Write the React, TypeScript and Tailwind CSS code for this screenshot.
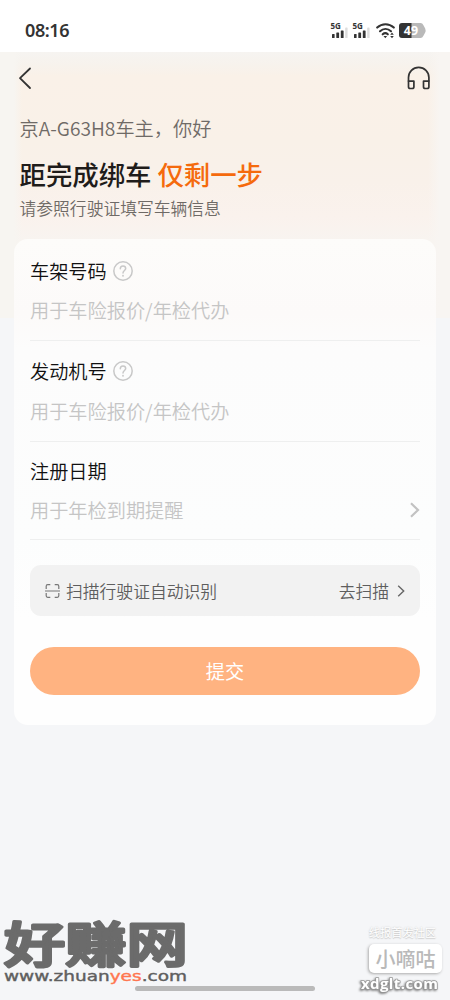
import React from 'react';

const fields = [
  {
    id: 'vin',
    label: '车架号码',
    placeholder: '用于车险报价/年检代办',
    help: true,
    arrow: false,
    box: 'pt-5 pb-[18px]',
    gap: 'mt-[15px]'
  },
  {
    id: 'engine',
    label: '发动机号',
    placeholder: '用于车险报价/年检代办',
    help: true,
    arrow: false,
    box: 'pt-[18px] pb-[18px]',
    gap: 'mt-4'
  },
  {
    id: 'date',
    label: '注册日期',
    placeholder: '用于年检到期提醒',
    help: false,
    arrow: true,
    box: 'pt-[17px] pb-[17px]',
    gap: 'mt-[15px]'
  }
];

const Signal = () => (
  <svg className="w-[17px] h-4 overflow-visible" viewBox="0 0 17 16">
    <text x="-0.5" y="5.6" fontSize="8" fontWeight="700" fill="#333" fontFamily="Noto Sans, sans-serif">5G</text>
    <rect x="1" y="11" width="2.6" height="4" rx="0.6" fill="#333" />
    <rect x="5.3" y="9.5" width="2.8" height="5.5" rx="0.6" fill="#333" />
    <rect x="9.8" y="7.5" width="2.8" height="7.5" rx="0.6" fill="#333" />
    <rect x="14.2" y="4.5" width="2.4" height="10.5" rx="0.6" fill="#ddd" />
  </svg>
);

const StatusBar = () => (
  <div className="h-[52px] bg-white flex items-start justify-between pl-[25px] pr-[24px]">
    <span className="mt-[17.5px] text-[18px] leading-6 font-semibold text-[#333] font-['Noto_Sans',sans-serif] tracking-[-0.4px]">
      08:16
    </span>
    <div className="mt-[23px] flex items-start">
      <Signal />
      <span className="w-[5px]" />
      <Signal />
      <svg className="ml-[6px] w-[19px] h-4" viewBox="0 0 19 16" fill="none" stroke="#333" strokeWidth="2.1" strokeLinecap="round">
        <path d="M1.2 4.6C6 .1 13 .1 17.8 4.6" />
        <path d="M4 8.2c3.3-3 7.7-3 11 0" />
        <path d="M6.7 11.3c1.6-1.4 3.6-1.4 5.1 0" />
        <path d="M7.5 13h3.6l-1.8 2.3z" fill="#333" stroke="none" />
        <path d="M14.2 11.7h3.6L16 9.4zM14.2 13h3.6L16 15.3z" fill="#333" stroke="none" />
      </svg>
      <svg className="ml-1 w-[27px] h-4" viewBox="0 0 27 16">
        <path d="M12 0H21.5Q23.5 0 24.3 2L26.2 5.5Q27 7.5 26.2 9.5L24.3 13Q23.5 15 21.5 15H12z" fill="#b9b9b9" />
        <path d="M12.5 0H3Q0 0 0 3V12Q0 15 3 15H12.5z" fill="#333" />
        <text x="12" y="12.2" fontSize="12.5" fontWeight="700" fill="#fff" textAnchor="middle" fontFamily="Noto Sans, sans-serif">49</text>
      </svg>
    </div>
  </div>
);

const HelpIcon = () => (
  <svg className="w-5 h-5" viewBox="0 0 20 20" fill="none" stroke="#c8c8c8" strokeWidth="1.5" strokeLinecap="round" strokeLinejoin="round">
    <circle cx="10" cy="10" r="9.2" />
    <path d="M7.3 7.8Q7.3 5 10 5T12.7 7.6C12.7 9.5 10 9.6 10 12" />
    <path d="M10 14.7v.1" strokeWidth="1.8" />
  </svg>
);

const Watermarks = () => (
  <>
    <div className="absolute left-[4px] top-[917px] w-[185px]">
      <svg className="block w-[185px] h-[54px] overflow-visible" viewBox="0 0 185 54">
        <g transform="translate(0 44.8) scale(1.29 1)">
          <text x="0" y="0" fontSize="47.5" fontWeight="500" fill="#6b6b6b" stroke="#6b6b6b" strokeWidth="3" strokeLinejoin="round" fontFamily="Noto Sans CJK SC, sans-serif">
            好赚网
          </text>
        </g>
      </svg>
      <svg className="block w-[185px] h-[14px] overflow-visible" viewBox="0 0 185 14">
        <text x="0" y="10" fontSize="14" fill="#5f5f5f" stroke="#5f5f5f" strokeWidth="0.4" textLength="183" lengthAdjust="spacingAndGlyphs" fontFamily="DejaVu Sans, sans-serif">
          www.zhuan<tspan fill="#ff7650" stroke="#ff7650">yes</tspan>.com
        </text>
      </svg>
    </div>
    <div className="absolute right-[8px] top-[924px] w-[84px] flex flex-col items-end">
      <span className="mr-[6px] text-[11.2px] leading-4 text-white [text-shadow:0_0_2px_#c5c5c5,0_1px_1px_#d0d0d0]">线报首发社区</span>
      <div className="mt-[4px] w-[73px] h-[29px] rounded-[5px] bg-white shadow-[-1px_1px_3px_#aaa] flex items-center justify-center text-[20px] leading-7 text-[#b9b9b9] font-medium">
        小嘀咕
      </div>
      <svg className="mt-[2px] w-[84px] h-5 overflow-visible [filter:drop-shadow(-1px_1px_1px_#777)]" viewBox="0 0 84 20">
        <text
          x="3"
          y="14"
          fontSize="15"
          fontWeight="700"
          fill="#fff"
          stroke="#999"
          strokeWidth="1.6"
          strokeLinejoin="round"
          paintOrder="stroke"
          textLength="77"
          lengthAdjust="spacing"
          fontFamily="Open Sans, Noto Sans, sans-serif"
        >
          xdglt.com
        </text>
      </svg>
    </div>
  </>
);

const App = () => {
  return (
    <div className="relative w-[450px] h-[1000px] overflow-hidden bg-[#f5f6f8] font-['Noto_Sans_CJK_SC',sans-serif]">
      <StatusBar />

      {/* Header tint runs behind the top of the card */}
      <div className="h-[266px] bg-[linear-gradient(to_right,#f7f5f1_0,#f7f5f1_14px,#f7f5f100_22px,#f8f5f200_428px,#f8f5f2_440px),linear-gradient(to_bottom,#f6f4f1_0,#f7f2ec_14px,#faf1e8_24px,#f9f1e8_90px,#f9f1ea_130px,#faf2ed_165px,#f8f4f0_188px,#f8f5f2_266px)]">
        {/* Navigation */}
        <div className="h-[52px] flex items-center justify-between pl-[18px] pr-[19px]">
          <svg className="w-[14px] h-6" viewBox="0 0 14 24" fill="none" stroke="#333" strokeWidth="1.8" strokeLinecap="round" strokeLinejoin="round">
            <path d="M12 2.5L2 12.2L12 22" />
          </svg>
          <svg className="w-6 h-6" viewBox="0 0 24 24" fill="none" stroke="#333" strokeWidth="1.7" strokeLinejoin="round">
            <path d="M1.5 15.5V11.5C1.5 5.7 6 1.4 11.7 1.4S21.9 5.7 21.9 11.5V15.5" />
            <path d="M1.5 15.2H6.9V20.7Q6.9 22.5 5.1 22.5H3.3Q1.5 22.5 1.5 20.7z" />
            <path d="M21.9 15.2H16.5V20.7Q16.5 22.5 18.3 22.5H20.1Q21.9 22.5 21.9 20.7z" />
          </svg>
        </div>

        {/* Greeting */}
        <div className="pl-[19.5px] pt-3">
          <p className="text-[19.2px] leading-6 font-[350] text-[#6f6a66]">京A-G63H8车主，你好</p>
          <h1 className="mt-[18px] text-[26.4px] leading-8 font-medium text-[#1f1c1a]">
            距完成绑车 <span className="text-[#f56a0d]">仅剩一步</span>
          </h1>
          <p className="mt-[6px] text-[16.8px] leading-6 font-[350] text-[#6f6a66]">请参照行驶证填写车辆信息</p>
        </div>
      </div>

      {/* Form card */}
      <div className="-mt-[79px] mx-[14px] h-[486px] px-4 rounded-[14px] bg-[linear-gradient(to_bottom,#fdfcfa_0,#fcfaf9_75px,#fcfcfc_110px,#fcfdfd_300px,#fefefe_380px)]">
        {fields.map((field) => (
          <div key={field.id} className={`border-b border-[#eeefef] ${field.box}`}>
            <div className="h-6 flex items-center gap-[6px]">
              <span className="text-[19.2px] leading-6 font-[350] text-[#111]">{field.label}</span>
              {field.help && <HelpIcon />}
            </div>
            <div className={`h-6 flex items-center justify-between ${field.gap}`}>
              <span className="text-[19.2px] leading-6 font-[350] text-[#c5c5c5]">{field.placeholder}</span>
              {field.arrow && (
                <svg className="w-[11px] h-4" viewBox="0 0 11 16" fill="none" stroke="#c2c2c2" strokeWidth="2.2">
                  <path d="M2 1.2L9 8L2 14.8" />
                </svg>
              )}
            </div>
          </div>
        ))}

        <div className="mt-[25px] h-[51px] rounded-[11px] bg-[#f2f2f2] flex items-center justify-between pl-[15px] pr-[15px] text-[16.8px] leading-6 font-[350] text-[#5e5e5e]">
          <div className="flex items-center gap-[6px]">
            <svg className="w-[15px] h-[14px]" viewBox="0 0 15 14" fill="none" stroke="#777" strokeWidth="1.2">
              <path d="M1.2 5V2.2Q1.2.7 2.7.7H5.3M9.7.7h2.6q1.5 0 1.5 1.5V5M1.2 9v2.8q0 1.5 1.5 1.5H5.3M9.7 13.3h2.6q1.5 0 1.5-1.5V9M0 7h15" />
            </svg>
            <span>扫描行驶证自动识别</span>
          </div>
          <div className="flex items-center gap-2">
            <span>去扫描</span>
            <svg className="w-2 h-3" viewBox="0 0 8 12" fill="none" stroke="#666" strokeWidth="1.4">
              <path d="M1.2 .8L6.7 6L1.2 11.2" />
            </svg>
          </div>
        </div>

        <button className="mt-[31px] w-full h-[47.5px] rounded-full bg-[#ffb381] text-white text-[19.2px] leading-6 font-normal">
          提交
        </button>
      </div>

      <div className="absolute left-[135px] top-[986px] w-[180px] h-[5px] rounded-full bg-[#bababa]" />
      <Watermarks />
    </div>
  );
};

export default App;
